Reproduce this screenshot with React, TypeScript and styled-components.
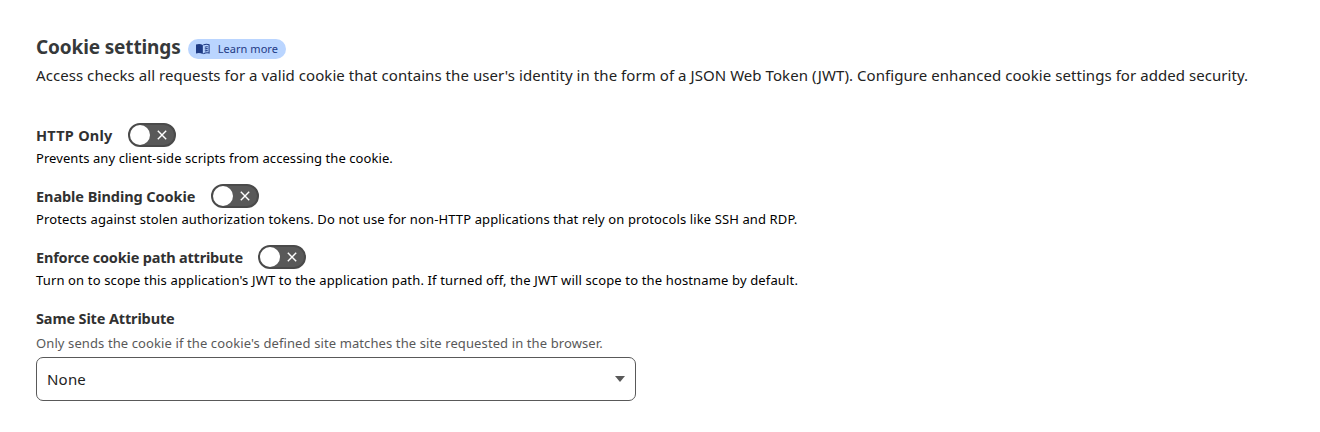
import React from "react";
import styled, { createGlobalStyle } from "styled-components";

const GlobalStyle = createGlobalStyle`
  * { box-sizing: border-box; }
  body { margin: 0; background: #fff; font-family: "Noto Sans", "Open Sans", sans-serif; color: #222; }
  h2, h3, p { margin: 0; }
`;

const Page = styled.main`padding: 34px 36px 0; display: flex; flex-direction: column; align-items: flex-start;`;
const Heading = styled.header`display: flex; align-items: center; gap: 8px; height: 26px;`;
const Title = styled.h2`
  width: 144px; font-size: 19px; line-height: 26px; font-weight: 700; letter-spacing: -0.14px; color: #36393a; white-space: nowrap;
`;
const LearnMore = styled.a`
  display: flex; align-items: center; gap: 8px; width: 98px; height: 20px; margin-top: 4px; padding: 0 8px 1px;
  border-radius: 10px; background: #bad5ff; color: #1d3a85; font-size: 11px; letter-spacing: 0.05px; white-space: nowrap;
`;
const Intro = styled.p`margin-top: 3px; font-size: 15px; line-height: 24px; letter-spacing: 0.058px; white-space: nowrap;`;
const Settings = styled.section`display: flex; flex-direction: column; gap: 14px; margin-top: 35px;`;
const Setting = styled.div`height: 47px;`;
const SettingHead = styled.div`display: flex; align-items: center; gap: 15px; height: 26px;`;
const Label = styled.h3<{ $w: number; $track: number }>`
  width: ${(p) => p.$w}px; font-size: 14.5px; line-height: 20px; font-weight: 700; letter-spacing: ${(p) => p.$track}px;
  color: #313131; white-space: nowrap;
`;
const Switch = styled.button`
  display: flex; align-items: center; justify-content: space-between; width: 48px; height: 24px; padding: 0 7px 0 0;
  border: 2px solid #4a4a4a; border-radius: 12px; background: #595959;
`;
const Knob = styled.span`width: 20px; height: 20px; border-radius: 50%; background: #fff;`;
const Description = styled.p<{ $track: number }>`
  font-size: 13px; line-height: 20px; letter-spacing: ${(p) => p.$track}px; color: #000; white-space: nowrap;
`;
const Hint = styled(Description)`margin-top: 5px; color: #595959;`;
const SelectField = styled.div`padding-top: 3px;`;
const Select = styled.button`
  display: flex; align-items: center; justify-content: space-between; width: 600px; height: 44px; margin-top: 4px;
  padding: 0 10px; border: 1px solid #595959; border-radius: 7px; background: #fff;
  font: 15px "Noto Sans", sans-serif; letter-spacing: 0.2px; color: #222;
`;

const items = [
  { label: "HTTP Only", w: 77, labelTrack: 0.25, track: 0.075, text: "Prevents any client-side scripts from accessing the cookie." },
  { label: "Enable Binding Cookie", w: 160, labelTrack: -0.07, track: 0.118, text: "Protects against stolen authorization tokens. Do not use for non-HTTP applications that rely on protocols like SSH and RDP." },
  { label: "Enforce cookie path attribute", w: 207, labelTrack: -0.2, track: 0.144, text: "Turn on to scope this application's JWT to the application path. If turned off, the JWT will scope to the hostname by default." },
];

const BookIcon = () => (
  <svg width="14" height="12" viewBox="0 0 14 12">
    <path d="M0 1.5Q3.5.2 7 1.8v9.4Q3.5 9.6 0 10.6z" fill="#1d3a85" />
    <path d="M7.5 2Q10.5.5 13.4 1.7v8.4Q10.5 9.2 7.5 10.8M9 4.1q1.5-.6 3-.4M9 6.1q1.5-.6 3-.4M9 8.1q1.5-.6 3-.4" fill="none" stroke="#1d3a85" strokeWidth="1.1" />
  </svg>
);

export default function App() {
  return (
    <Page>
      <GlobalStyle />
      <Heading>
        <Title>Cookie settings</Title>
        <LearnMore>
          <BookIcon />
          Learn more
        </LearnMore>
      </Heading>
      <Intro>Access checks all requests for a valid cookie that contains the user's identity in the form of a JSON Web Token (JWT). Configure enhanced cookie settings for added security.</Intro>
      <Settings>
        {items.map((i) => (
          <Setting key={i.label}>
            <SettingHead>
              <Label $w={i.w} $track={i.labelTrack}>{i.label}</Label>
              <Switch role="switch" aria-checked={false} aria-label={i.label}>
                <Knob />
                <svg width="10" height="10" viewBox="0 0 10 10"><path d="M.8.8l8.4 8.4M9.2.8L.8 9.2" stroke="#fff" strokeWidth="1.4" /></svg>
              </Switch>
            </SettingHead>
            <Description $track={i.track}>{i.text}</Description>
          </Setting>
        ))}
        <SelectField>
          <Label $w={140} $track={-0.14}>Same Site Attribute</Label>
          <Hint $track={0.105}>Only sends the cookie if the cookie's defined site matches the site requested in the browser.</Hint>
          <Select>
            None
            <svg width="10" height="6" viewBox="0 0 10 6"><path d="M0 0h10L5 6z" fill="#595959" /></svg>
          </Select>
        </SelectField>
      </Settings>
    </Page>
  );
}
